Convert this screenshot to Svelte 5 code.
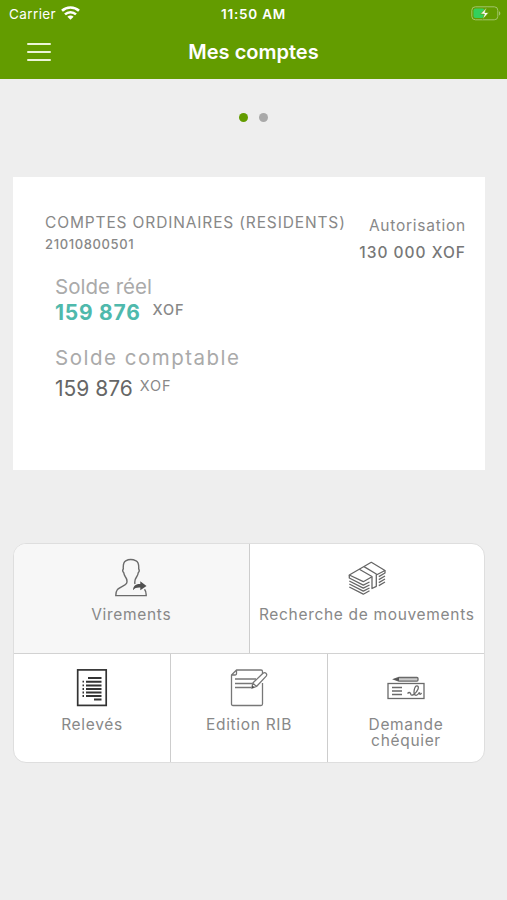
<script lang="ts">
	const account = {
		label: "COMPTES ORDINAIRES (RESIDENTS)",
		number: "21010800501",
		currency: "XOF",
		authorised: "130 000",
		balance: "159 876",
		bookBalance: "159 876",
	};

	const pages = [0, 1];
	let activePage = $state(0);
</script>

<div class="app">
	<header>
		<div class="status-bar">
			<div class="carrier">
				<span>Carrier</span>
				<svg width="19" height="14" viewBox="0 0 19 14" fill="none" stroke="#fff" stroke-width="2.6">
					<path d="M1 4.8C5.700.4 13.300.4 18 4.800" />
					<path d="M4 8.400c3.200-2.900 7.800-2.900 11 0" />
					<path d="M9.500 13.800 6.400 10.700c1.800-1.600 4.400-1.600 6.200 0z" fill="#fff" stroke="none" />
				</svg>
			</div>
			<span class="clock">11:50 AM</span>
			<svg class="battery" width="30" height="15" viewBox="0 0 30 15">
				<rect x=".8" y=".8" width="26" height="13" rx="3.5" fill="none" stroke="#a3c56b" />
				<path d="M28 5.2c1.8.7 1.8 3.6 0 4.3z" fill="#a3c56b" />
				<rect x="2.5" y="2.5" width="11" height="9.6" rx="2" fill="#34d05c" />
				<path d="M15.8 1.5 9.4 8.1h4l-1.8 5.4 6.2-7h-3.9z" fill="#fff" stroke="#639c00" stroke-width=".7" />
			</svg>
		</div>
		<div class="nav-bar">
			<button class="menu" aria-label="Menu">
				<span></span>
				<span></span>
				<span></span>
			</button>
			<h1>Mes comptes</h1>
		</div>
	</header>

	<div class="dots">
		{#each pages as page}
			<button
				class="dot"
				class:active={page === activePage}
				aria-label="Compte {page + 1}"
				onclick={() => (activePage = page)}
			></button>
		{/each}
	</div>

	<section class="card">
		<div class="card-top">
			<div class="account">
				<p class="account-label">{account.label}</p>
				<p class="account-number">{account.number}</p>
			</div>
			<div class="authorised">
				<p class="authorised-label">Autorisation</p>
				<p class="authorised-value">{account.authorised} {account.currency}</p>
			</div>
		</div>
		<div class="balances">
			<p class="real-label">Solde réel</p>
			<p class="real-value"><span>{account.balance}</span><small>{account.currency}</small></p>
			<p class="book-label">Solde comptable</p>
			<p class="book-value"><span>{account.bookBalance}</span><small>{account.currency}</small></p>
		</div>
	</section>

	<nav class="actions">
		<div class="row">
			<button class="action pressed">
				<svg width="34" height="40" viewBox="0 0 34 40" fill="none" stroke="#6b6b6b" stroke-width="1.4">
					<path d="M21 26c-.8-3 .2-5.200 1.800-7.500.9-1.200 1.200-2.400 1.400-3.700 1.100-1 1.300-2.500.5-3.900.3-4.800-.3-6.800-2.600-8-3.200-1.600-7.600-1.600-10.400 0-2.200 1.300-2.700 3.800-2.400 8-.9 1.400-.6 2.900.5 3.900.2 1.300.6 2.500 1.400 3.700 1.800 2.500 2.300 4.800 1.300 6.900-1.300 2.400-6.300 3.200-9.100 6.200-1.300 1.500-1.600 3.500-1.600 6h30.400c.1-2.500-.2-4.500-1.700-6.300" />
					<path d="M19 32.300c.1-4 2.200-6.600 7.300-6.400v-2.600l6.200 4.600-6.200 4.400v-2.700c-3.500-.2-5.400.4-7.300 2.700z" fill="#505050" stroke="none" />
				</svg>
				<span>Virements</span>
			</button>
			<button class="action">
				<svg width="40" height="40" viewBox="0 0 40 40" fill="none" stroke="#666" stroke-width="1.3" stroke-linejoin="round">
					<path d="m25 18.700-8.700 5L2.300 17 24.300 4.300 38 12.500l-8.700 4.500" />
					<path d="M12.300 11.200 25 18.500v12l4.300-2.200V16L17 8.600" />
					<path d="M2.300 17v3l14 7.200 6.200-3.200M2.300 23l14 7.200 6.200-3.200M2.300 26l14 7.200 6.200-3.200M2.300 29l14 7.200 6.200-3.400" />
					<path d="M38 12.500v2.500l-6.200 3.600M38 18l-6.200 3.600M38 21l-6.200 3.600M38 24l-6.200 3.600" />
				</svg>
				<span>Recherche de mouvements</span>
			</button>
		</div>
		<div class="row">
			<button class="action">
				<svg width="32" height="40" viewBox="0 0 32 40" fill="none" stroke="#333">
					<rect x="1.7" y="1.9" width="28.5" height="35.5" stroke-width="1.7" />
					<path d="M12 10h13.500M10 13.700h15.500M10 17.400h15.500M10 21h15.500M10 24.500h15.500M10 28h15.500M18 31.600h7.500" stroke-width="2" />
					<path d="M6.500 13.700H8M6.500 17.400H8M6.500 21H8M6.500 24.500H8M6.500 28H8" stroke-width="1.800" />
				</svg>
				<span>Relevés</span>
			</button>
			<button class="action">
				<svg class="rib" width="38" height="40" viewBox="0 0 38 40" fill="none" stroke="#777" stroke-width="1.3" stroke-linejoin="round">
					<path d="M32.500 15v21q0 1.500-1.500 1.500H3q-1.500 0-1.500-1.500V7l5-5H31q1.500 0 1.500 1.500v3M1.500 7H5q1.500 0 1.500-1.500V2" />
					<path d="M5 11h21M5 15.500h17M5 19.500h16.500" />
					<path d="m21.800 20.200 1-5.200L33 5.200c2.200-1.700 4.700.6 3.200 2.900L26.500 18.500zM23 15.200l3.400 3.200" fill="#fff" />
					<path d="m21.800 20.200.6-2.800 2.100 1.900z" fill="#444" stroke="none" />
				</svg>
				<span>Edition RIB</span>
			</button>
			<button class="action">
				<svg width="40" height="40" viewBox="0 0 40 40" fill="none" stroke="#6a6a6a" stroke-width="1.3">
					<rect x="2" y="15.500" width="36" height="15" />
					<path d="M6 19.500h10M6 23h10M6 26.500h10" />
					<path d="M21.500 25.500c2-2 3-.5 3.300.7.400 1.300 1.600 1.200 3 .2 4-3.200 6-8 3.300-8.500-2.800-.3-4.400 8.600-1.600 9.300 1.700.5 3.200-1.500 4-2.900-.4 2.400 1 2.700 2 .6" />
					<path d="M13 9.500h18q1 0 1 1v1.600q0 1-1 1H13l-5-1.800z" fill="#ccc" />
					<path d="m7 11.300 6-1.800v3.600z" fill="#555" stroke="none" />
				</svg>
				<span>Demande chéquier</span>
			</button>
		</div>
	</nav>
</div>

<style>
	:global(body) {
		margin: 0;
		background: #eee;
	}

	.app {
		min-height: 900px;
		background: #eee;
		font-family: Inter, "Liberation Sans", sans-serif;
		color: #888;
	}

	p,
	h1 {
		margin: 0;
		white-space: nowrap;
	}

	button {
		padding: 0;
		border: 0;
		background: none;
		font: inherit;
		color: inherit;
		cursor: pointer;
	}

	header {
		height: 79px;
		background: #639c00;
		color: #fff;
	}

	.status-bar {
		display: grid;
		grid-template-columns: 1fr auto 1fr;
		align-items: center;
		height: 27px;
		padding: 0 6px 0 9px;
		font-size: 13.5px;
	}

	.carrier {
		display: flex;
		align-items: center;
		gap: 5px;
		letter-spacing: 0.4px;
	}

	.carrier svg {
		margin-bottom: 2px;
	}

	.clock {
		margin-right: 3px;
		font-weight: 600;
		letter-spacing: 0.8px;
	}

	.battery {
		justify-self: end;
	}

	.nav-bar {
		display: grid;
		grid-template-columns: 60px 1fr 60px;
		align-items: center;
		height: 50px;
	}

	.menu {
		display: flex;
		flex-direction: column;
		gap: 6px;
		width: 24px;
		margin-left: 27px;
	}

	.menu span {
		height: 2px;
		border-radius: 1px;
		background: #ecf5d8;
	}

	h1 {
		font-size: 20px;
		font-weight: 600;
		text-align: center;
	}

	.dots {
		display: flex;
		justify-content: center;
		gap: 11px;
		padding-top: 34px;
		height: 64px;
	}

	.dot {
		width: 9px;
		height: 9px;
		border-radius: 50%;
		background: #a9a9a9;
	}

	.dot.active {
		background: #639c00;
	}

	.card {
		box-sizing: border-box;
		width: 472px;
		height: 293px;
		margin-left: 13px;
		padding: 36px 19px 0 32px;
		background: #fff;
	}

	.card-top {
		display: flex;
		justify-content: space-between;
	}

	.account-label {
		font-size: 15.5px;
		line-height: 20px;
		letter-spacing: 0.86px;
	}

	.account-number {
		font-size: 13px;
		font-weight: 500;
		line-height: 22px;
		letter-spacing: 0.62px;
	}

	.authorised {
		padding-top: 1px;
		text-align: right;
	}

	.authorised-label {
		font-size: 15.5px;
		line-height: 24px;
		letter-spacing: 0.75px;
	}

	.authorised-value {
		font-size: 15.5px;
		font-weight: 500;
		line-height: 29px;
		letter-spacing: 1px;
		color: #777;
	}

	.balances {
		padding: 7px 0 0 10px;
	}

	.real-label,
	.book-label {
		font-size: 20.5px;
		line-height: 26px;
		color: #aaa;
	}

	.book-label {
		letter-spacing: 1.5px;
	}

	.real-value,
	.book-value {
		display: flex;
		font-size: 21px;
		line-height: 26px;
	}

	.real-value span {
		font-weight: 700;
		letter-spacing: 0.75px;
		color: #4fb9ac;
	}

	.real-value small {
		margin-left: 12px;
		font-weight: 500;
		line-height: 19px;
	}

	.book-label {
		margin-top: 19px;
	}

	.book-value {
		margin-top: 5px;
		color: #666;
	}

	.book-value small {
		margin-left: 7px;
		line-height: 20px;
	}

	small {
		font-size: 14.5px;
		letter-spacing: 0.9px;
		color: #888;
	}

	.actions {
		width: 470px;
		margin: 73px 0 0 13px;
		border: 1px solid #dedede;
		border-radius: 13px;
		background: #fff;
		overflow: hidden;
	}

	.row {
		display: flex;
		height: 109px;
	}

	.row + .row {
		height: 108px;
		border-top: 1px solid #d2d2d2;
	}

	.action {
		display: flex;
		flex: 1 1 0;
		flex-direction: column;
		align-items: center;
		min-width: 0;
		padding-top: 14px;
		font-size: 15.5px;
		line-height: 16px;
		letter-spacing: 0.68px;
	}

	.action + .action {
		border-left: 1px solid #cdcdcd;
	}

	.action.pressed {
		background: #f7f7f7;
	}

	.action span {
		margin-top: 9px;
	}

	.row + .row span {
		max-width: 100px;
	}
</style>
